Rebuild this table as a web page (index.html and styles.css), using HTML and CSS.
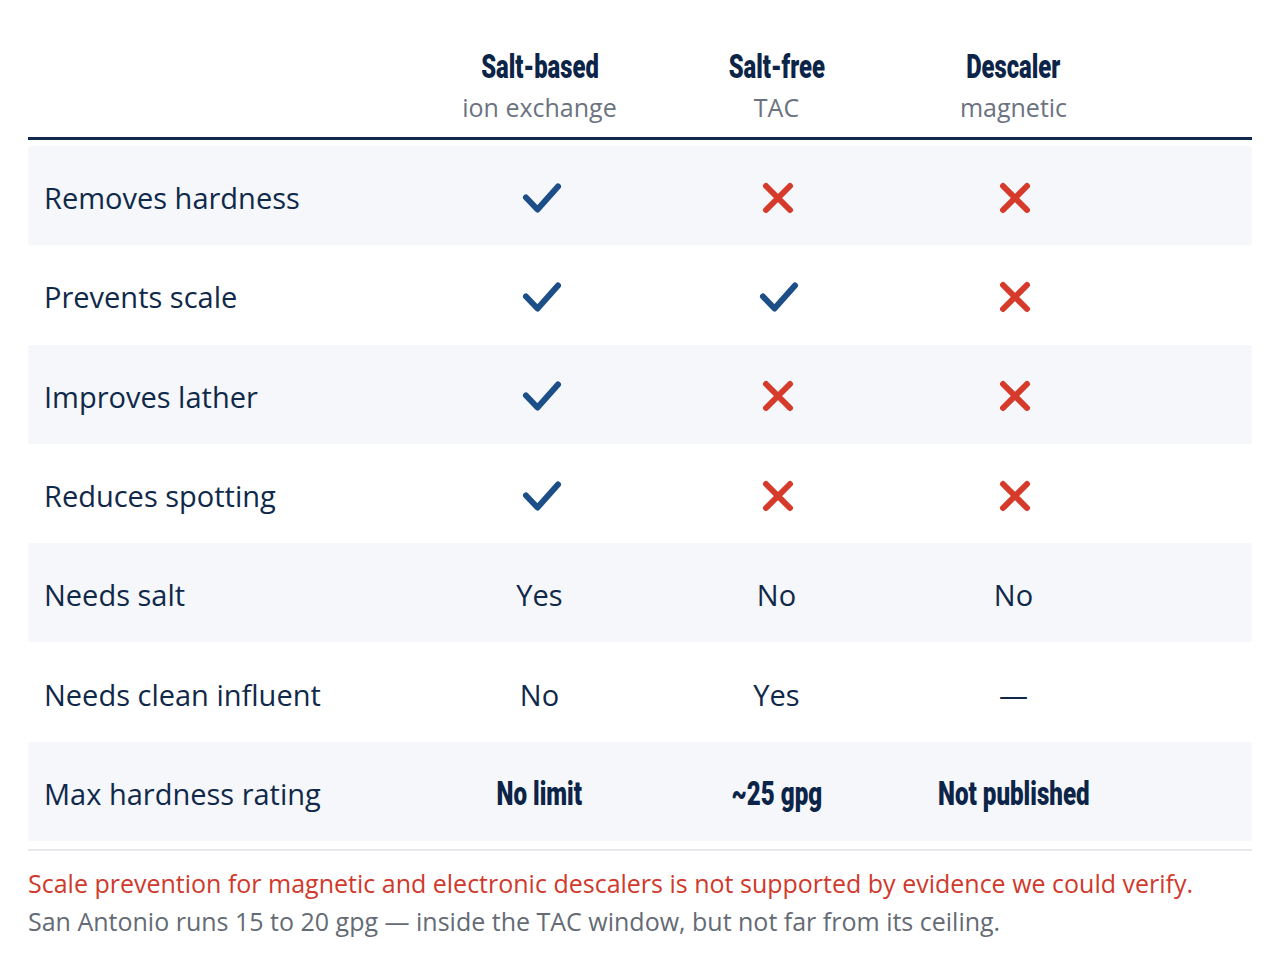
FILE: index.html
```html
<!DOCTYPE html>
<html lang="en">
<head>
<meta charset="utf-8">
<title>Water treatment comparison</title>
<link rel="stylesheet" href="styles.css">
</head>
<body>
<main class="page">
  <div class="table">
    <div class="row head">
      <div class="cell label"></div>
      <div class="cell th"><span class="cond name">Salt-based</span><span class="sub">ion exchange</span></div>
      <div class="cell th"><span class="cond name">Salt-free</span><span class="sub">TAC</span></div>
      <div class="cell th"><span class="cond name">Descaler</span><span class="sub">magnetic</span></div>
      <div class="cell"></div>
    </div>
    <div class="body">
      <div class="row shade">
        <div class="cell label">Removes hardness</div>
        <div class="cell val"><svg class="ico" viewBox="0 0 44 36"><path class="chk" d="M8 19.5 L19.5 31.5 L40 8.5"/></svg></div>
        <div class="cell val"><svg class="ico" viewBox="0 0 44 36"><path class="crs" d="M11 8 L35 32 M35 8 L11 32"/></svg></div>
        <div class="cell val"><svg class="ico" viewBox="0 0 44 36"><path class="crs" d="M11 8 L35 32 M35 8 L11 32"/></svg></div>
        <div class="cell"></div>
      </div>
      <div class="row">
        <div class="cell label">Prevents scale</div>
        <div class="cell val"><svg class="ico" viewBox="0 0 44 36"><path class="chk" d="M8 19.5 L19.5 31.5 L40 8.5"/></svg></div>
        <div class="cell val"><svg class="ico" viewBox="0 0 44 36"><path class="chk" d="M8 19.5 L19.5 31.5 L40 8.5"/></svg></div>
        <div class="cell val"><svg class="ico" viewBox="0 0 44 36"><path class="crs" d="M11 8 L35 32 M35 8 L11 32"/></svg></div>
        <div class="cell"></div>
      </div>
      <div class="row shade">
        <div class="cell label">Improves lather</div>
        <div class="cell val"><svg class="ico" viewBox="0 0 44 36"><path class="chk" d="M8 19.5 L19.5 31.5 L40 8.5"/></svg></div>
        <div class="cell val"><svg class="ico" viewBox="0 0 44 36"><path class="crs" d="M11 8 L35 32 M35 8 L11 32"/></svg></div>
        <div class="cell val"><svg class="ico" viewBox="0 0 44 36"><path class="crs" d="M11 8 L35 32 M35 8 L11 32"/></svg></div>
        <div class="cell"></div>
      </div>
      <div class="row">
        <div class="cell label">Reduces spotting</div>
        <div class="cell val"><svg class="ico" viewBox="0 0 44 36"><path class="chk" d="M8 19.5 L19.5 31.5 L40 8.5"/></svg></div>
        <div class="cell val"><svg class="ico" viewBox="0 0 44 36"><path class="crs" d="M11 8 L35 32 M35 8 L11 32"/></svg></div>
        <div class="cell val"><svg class="ico" viewBox="0 0 44 36"><path class="crs" d="M11 8 L35 32 M35 8 L11 32"/></svg></div>
        <div class="cell"></div>
      </div>
      <div class="row shade">
        <div class="cell label">Needs salt</div>
        <div class="cell val txt">Yes</div>
        <div class="cell val txt">No</div>
        <div class="cell val txt">No</div>
        <div class="cell"></div>
      </div>
      <div class="row">
        <div class="cell label">Needs clean influent</div>
        <div class="cell val txt">No</div>
        <div class="cell val txt">Yes</div>
        <div class="cell val txt">—</div>
        <div class="cell"></div>
      </div>
      <div class="row shade">
        <div class="cell label">Max hardness rating</div>
        <div class="cell val txt"><span class="cond strong">No limit</span></div>
        <div class="cell val txt"><span class="cond strong">~25 gpg</span></div>
        <div class="cell val txt"><span class="cond strong">Not published</span></div>
        <div class="cell"></div>
      </div>
    </div>
  </div>
  <div class="notes">
    <p class="warn">Scale prevention for magnetic and electronic descalers is not supported by evidence we could verify.</p>
    <p class="note">San Antonio runs 15 to 20 gpg — inside the TAC window, but not far from its ceiling.</p>
  </div>
</main>
</body>
</html>
```
FILE: styles.css
```css
html, body {
  margin: 0;
  padding: 0;
  background: #ffffff;
}
body {
  font-family: "Open Sans", "Liberation Sans", sans-serif;
  color: #10294a;
}
.page {
  padding: 28px 28px 0 28px;
}
.row {
  display: grid;
  grid-template-columns: 393px 237px 237px 237px 1fr;
  align-items: center;
}
.head {
  padding: 18px 0 13px;
  border-bottom: 3px solid #0f2a4a;
}
.th {
  display: flex;
  flex-direction: column;
  align-items: center;
}
.cond {
  display: inline-block;
  font-family: "Roboto", "Liberation Sans", sans-serif;
  font-weight: 900;
  color: #0b2447;
  transform: scaleX(0.7);
}
.name {
  font-size: 34px;
  line-height: 40px;
}
.sub {
  font-size: 25px;
  line-height: 34px;
  margin-top: 4px;
  color: #6b7280;
}
.body {
  padding-top: 6px;
}
.body .row {
  height: 99.3px;
  font-size: 29px;
}
.shade {
  background: #f5f7fa;
  border-radius: 3px;
}
.label {
  padding-left: 16px;
}
.body .label,
.txt {
  padding-top: 4px;
}
.val {
  text-align: center;
  display: flex;
  justify-content: center;
  align-items: center;
}
.ico {
  width: 44px;
  height: 36px;
  display: block;
}
.chk, .crs {
  fill: none;
  stroke-width: 6;
  stroke-linecap: round;
  stroke-linejoin: round;
}
.chk { stroke: #1c4e88; }
.crs { stroke: #d63a2b; }
.strong {
  font-size: 34px;
  line-height: 40px;
  transform: scaleX(0.71);
}
.notes {
  margin-top: 8px;
  border-top: 2px solid #e6e8ec;
  padding-top: 13px;
}
.notes p {
  margin: 0;
  font-size: 25px;
  line-height: 38px;
}
.warn { color: #d0392b; }
.note { color: #646b75; }
```
